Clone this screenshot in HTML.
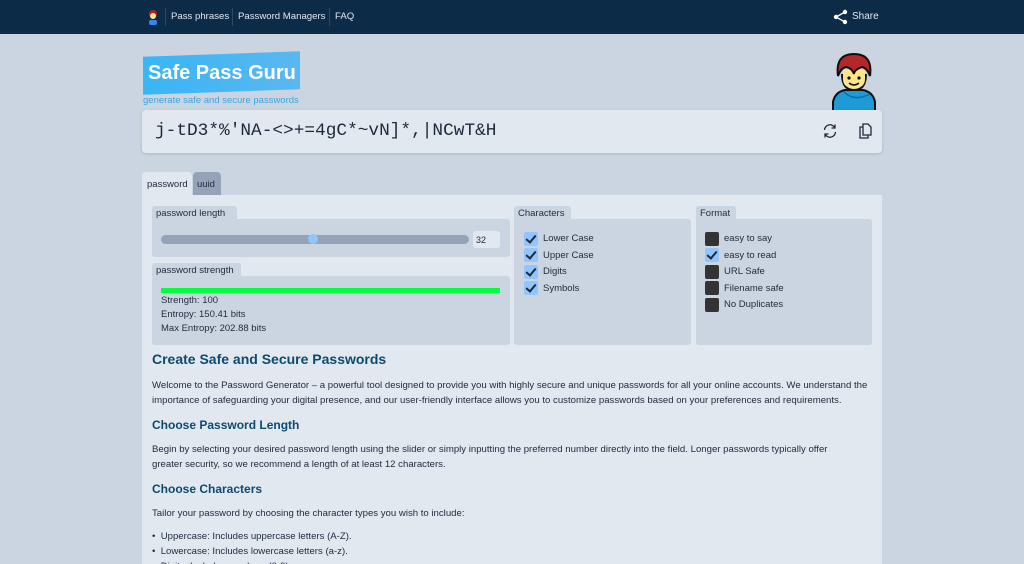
<!DOCTYPE html>
<html><head><meta charset="utf-8">
<style>
*{box-sizing:border-box;margin:0;padding:0}
html{overflow:hidden;height:564px}
body{width:1024px;height:564px;overflow:hidden;background:#cbd5e1;font-family:"Liberation Sans",Helvetica,Arial,sans-serif;color:#1e293b;position:relative}
.nav{position:absolute;left:0;top:0;width:1024px;height:34px;background:#0b2b47}
.nav a{position:absolute;top:11px;font-size:9.6px;color:#e2e8f0;white-space:nowrap}
.sep{position:absolute;top:8px;width:1px;height:18px;background:#2c4a66}
.abs{position:absolute}
.title{position:absolute;left:143px;top:54px;width:157px;height:38px;background:linear-gradient(90deg,#38b6f5,#5bb7f0);transform:skewY(-2deg)}
.title span{position:absolute;left:5px;top:8px;font-size:20px;font-weight:bold;color:#fff;transform:skewY(2deg);white-space:nowrap}
.pw{position:absolute;left:142px;top:110px;width:740px;height:43px;background:#e2e8f0;border-radius:4px;box-shadow:0 1px 3px rgba(0,0,0,.15)}
.pw span{position:absolute;left:13px;top:11px;font-family:"Liberation Mono",monospace;font-size:17.8px;color:#1e293b;white-space:nowrap}
.panel{position:absolute;left:142px;top:195px;width:740px;height:369px;background:#e2e8f0}
.leg{position:absolute;height:14px;background:#cbd5e1;border-radius:3px 3px 0 0;font-size:9.5px;padding:2px 4px;color:#1e293b;white-space:nowrap}
.box{position:absolute;background:#cbd5e1;border-radius:3px}
.cb{position:absolute;width:14px;height:14px;border-radius:2px}
.cb.on{background:#93c5fd}
.cb.off{background:#333}
.cb.on::after{content:"";position:absolute;left:4px;top:1px;width:4px;height:8px;border:solid #1e293b;border-width:0 2.5px 2.5px 0;transform:rotate(40deg)}
.lbl{position:absolute;font-size:9.5px;color:#1e293b;white-space:nowrap}
h2{position:absolute;font-size:14px;font-weight:bold;color:#0c4a6e;white-space:nowrap}
h3{position:absolute;font-size:12px;font-weight:bold;color:#0c4a6e;white-space:nowrap}
p{position:absolute;font-size:9.6px;line-height:15px;color:#1e293b;width:722px}
</style></head><body>
<div class="nav">
  <svg class="abs" style="left:147px;top:9px" width="12" height="16" viewBox="0 0 12 16"><circle cx="6" cy="5" r="4" fill="#b91c1c"/><circle cx="6" cy="7" r="3" fill="#fde68a"/><rect x="2" y="11" width="8" height="5" rx="2" fill="#3b82f6"/></svg>
  <div class="sep" style="left:165px"></div>
  <a style="left:171px">Pass phrases</a>
  <div class="sep" style="left:232px"></div>
  <a style="left:238px">Password Managers</a>
  <div class="sep" style="left:329px"></div>
  <a style="left:335px">FAQ</a>
  <svg class="abs" style="left:833px;top:9px" width="15" height="16" viewBox="0 0 15 16"><circle cx="12" cy="3" r="2.2" fill="#fff"/><circle cx="3" cy="8" r="2.2" fill="#fff"/><circle cx="12" cy="13" r="2.2" fill="#fff"/><path d="M12 3L3 8L12 13" stroke="#fff" stroke-width="1.3" fill="none"/></svg>
  <a style="left:852px;font-size:10px">Share</a>
</div>
<div class="title"><span>Safe Pass Guru</span></div>
<div class="abs" style="left:143px;top:95px;font-size:9.5px;color:#38a6e0;white-space:nowrap">generate safe and secure passwords</div>
<svg class="abs" style="left:830px;top:52px" width="48" height="60" viewBox="0 0 48 60">
  <path d="M3 60 L3 50 Q5 40 15 38 L33 38 Q43 40 45 50 L45 60Z" fill="#1e9ad6" stroke="#111" stroke-width="2"/>
  <path d="M14 40 Q24 50 40 42" stroke="#0b6da0" stroke-width="1.5" fill="none"/>
  <path d="M12 22 Q12 38 24 38 Q36 38 36 22" fill="#fde68a" stroke="#111" stroke-width="2"/>
  <path d="M13 18 L35 18 L35 27 Q35 36 24 36 Q13 36 13 27Z" fill="#fde68a"/>
  <path d="M8 24 Q5 2 24 2 Q43 2 40 24 Q37 16 32 15 Q24 18 24 22 Q22 16 16 15 Q11 16 8 24Z" fill="#b3262a" stroke="#111" stroke-width="2"/>
  <circle cx="19" cy="26" r="1.6" fill="#111"/><circle cx="29" cy="26" r="1.6" fill="#111"/>
  <path d="M19 31 Q24 35 29 31" stroke="#111" stroke-width="1.5" fill="none"/>
</svg>
<div class="pw"><span>j-tD3*%'NA-&lt;&gt;+=4gC*~vN]*,|NCwT&amp;H</span>
  <svg class="abs" style="left:680px;top:13px" width="16" height="16" viewBox="0 0 16 16" fill="none" stroke="#1e293b" stroke-width="1.3"><path d="M2.5 7A5.5 5.5 0 0 1 13 5M13.5 9A5.5 5.5 0 0 1 3 11"/><path d="M13 1.5V5H9.5M3 14.5V11H6.5"/></svg>
  <svg class="abs" style="left:716px;top:12px" width="15" height="18" viewBox="0 0 15 18" fill="none" stroke="#1e293b" stroke-width="1.3"><path d="M5 2H10L13 5V13H5Z"/><path d="M5 5H2V16H10V13"/></svg>
</div>
<div class="abs" style="left:142px;top:172px;width:50px;height:23px;background:#e2e8f0;border-radius:4px 4px 0 0;font-size:9.5px;padding:7px 5px">password</div>
<div class="abs" style="left:193px;top:172px;width:28px;height:23px;background:#94a3b8;border-radius:4px 4px 0 0;font-size:9.5px;padding:7px 4px;color:#1e293b">uuid</div>
<div class="panel"></div>
<div class="leg" style="left:152px;top:206px;width:85px">password length</div>
<div class="box" style="left:152px;top:219px;width:358px;height:38px"></div>
<div class="abs" style="left:161px;top:235px;width:308px;height:9px;background:#94a3b8;border-radius:5px"></div>
<div class="abs" style="left:308px;top:234px;width:10px;height:10px;background:#93c5fd;border-radius:50%"></div>
<div class="abs" style="left:473px;top:231px;width:27px;height:17px;background:#e2e8f0;border-radius:3px;font-size:9px;padding:4px 3px">32</div>
<div class="leg" style="left:152px;top:263px;width:89px">password strength</div>
<div class="box" style="left:152px;top:276px;width:358px;height:69px"></div>
<div class="abs" style="left:161px;top:288px;width:339px;height:5px;background:#00ff3c"></div>
<div class="lbl" style="left:161px;top:295px">Strength: 100</div>
<div class="lbl" style="left:161px;top:309px">Entropy: 150.41 bits</div>
<div class="lbl" style="left:161px;top:323px">Max Entropy: 202.88 bits</div>
<div class="leg" style="left:514px;top:206px;width:57px">Characters</div>
<div class="box" style="left:514px;top:219px;width:177px;height:126px"></div>
<div class="cb on" style="left:524px;top:232px"></div><div class="lbl" style="left:543px;top:233px">Lower Case</div>
<div class="cb on" style="left:524px;top:248px"></div><div class="lbl" style="left:543px;top:250px">Upper Case</div>
<div class="cb on" style="left:524px;top:265px"></div><div class="lbl" style="left:543px;top:266px">Digits</div>
<div class="cb on" style="left:524px;top:281px"></div><div class="lbl" style="left:543px;top:283px">Symbols</div>
<div class="leg" style="left:696px;top:206px;width:40px">Format</div>
<div class="box" style="left:696px;top:219px;width:176px;height:126px"></div>
<div class="cb off" style="left:705px;top:232px"></div><div class="lbl" style="left:724px;top:233px">easy to say</div>
<div class="cb on" style="left:705px;top:248px"></div><div class="lbl" style="left:724px;top:250px">easy to read</div>
<div class="cb off" style="left:705px;top:265px"></div><div class="lbl" style="left:724px;top:266px">URL Safe</div>
<div class="cb off" style="left:705px;top:281px"></div><div class="lbl" style="left:724px;top:283px">Filename safe</div>
<div class="cb off" style="left:705px;top:298px"></div><div class="lbl" style="left:724px;top:299px">No Duplicates</div>
<h2 style="left:152px;top:351px">Create Safe and Secure Passwords</h2>
<p style="left:152px;top:378px">Welcome to the Password Generator – a powerful tool designed to provide you with highly secure and unique passwords for all your online accounts. We understand the importance of safeguarding your digital presence, and our user-friendly interface allows you to customize passwords based on your preferences and requirements.</p>
<h3 style="left:152px;top:418px">Choose Password Length</h3>
<p style="left:152px;top:442px;width:700px">Begin by selecting your desired password length using the slider or simply inputting the preferred number directly into the field. Longer passwords typically offer greater security, so we recommend a length of at least 12 characters.</p>
<h3 style="left:152px;top:482px">Choose Characters</h3>
<p style="left:152px;top:506px">Tailor your password by choosing the character types you wish to include:</p>
<p style="left:152px;top:529px;line-height:15px">•&nbsp; Uppercase: Includes uppercase letters (A-Z).<br>•&nbsp; Lowercase: Includes lowercase letters (a-z).<br>•&nbsp; Digits: Includes numbers (0-9).</p>
</body></html>
